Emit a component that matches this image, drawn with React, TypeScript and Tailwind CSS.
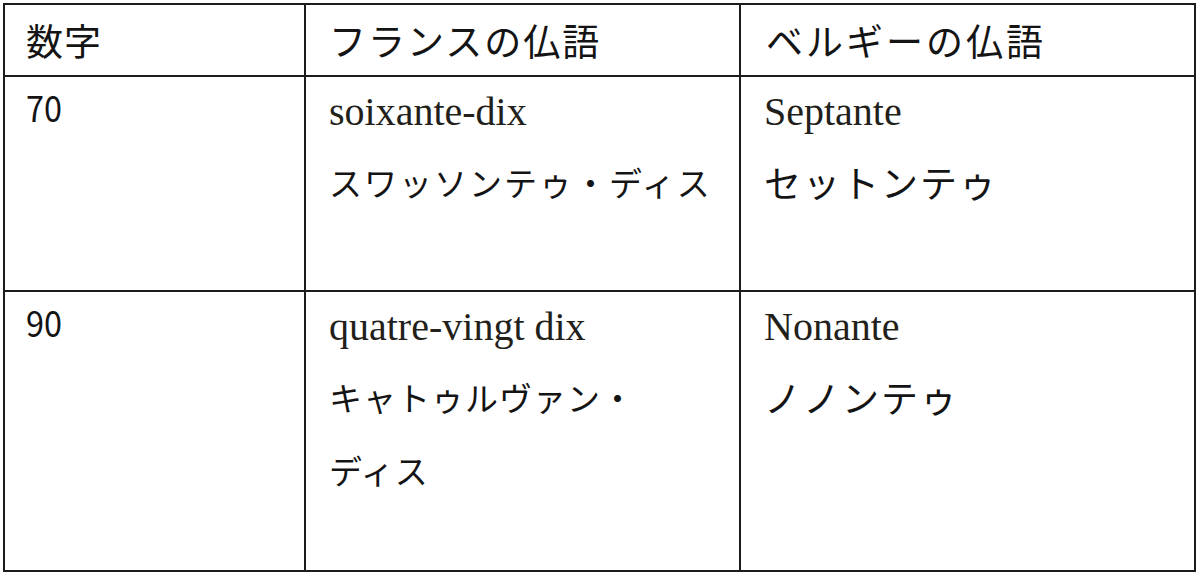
import React from "react";

const jp = "font-['MS_Gothic','Noto_Sans_CJK_JP',sans-serif]";
const lat = "font-['Liberation_Serif','Times_New_Roman',serif]";

function Cell({ children, last, bottom, h }: { children?: React.ReactNode; last?: boolean; bottom?: boolean; h: string }) {
  return (
    <div className={`${h} ${last ? "" : "border-r-2"} ${bottom ? "" : "border-b-2"} border-[#1c1c1c] pl-[21px]`}>
      {children}
    </div>
  );
}

export default function App() {
  return (
    <div className="w-[1200px] h-[576px] bg-white pt-[3px] pl-[3px] overflow-hidden">
      <div className="w-[1193px] border-2 border-[#1c1c1c] grid grid-cols-[301px_435px_453px] text-[#141414]">
        {/* header */}
        <Cell h="h-[72px]">
          <div className={`${jp} text-[37px] leading-[70px] tracking-[1px]`}>数字</div>
        </Cell>
        <Cell h="h-[72px]">
          <div className={`${jp} text-[37px] leading-[70px] tracking-[2px] pl-[2px]`}>フランスの仏語</div>
        </Cell>
        <Cell h="h-[72px]" last>
          <div className={`${jp} text-[37px] leading-[70px] tracking-[3px] pl-[4px]`}>ベルギーの仏語</div>
        </Cell>

        {/* row 70 */}
        <Cell h="h-[215px]">
          <div className={`${jp} text-[36px] leading-[58px] scale-x-90 origin-left`}>70</div>
        </Cell>
        <Cell h="h-[215px]">
          <div className={`${lat} text-[40px] leading-[70px] text-[#231f1a] pl-[2px]`}>soixante-dix</div>
          <div className={`${jp} text-[33px] leading-[70px] tracking-[2px] pl-[2px]`}>スワッソンテゥ・ディス</div>
        </Cell>
        <Cell h="h-[215px]" last>
          <div className={`${lat} text-[40px] leading-[70px] text-[#231f1a] pl-[2px]`}>Septante</div>
          <div className={`${jp} text-[37px] leading-[70px] tracking-[2px] pl-[2px]`}>セットンテゥ</div>
        </Cell>

        {/* row 90 */}
        <Cell h="h-[278px]" bottom>
          <div className={`${jp} text-[36px] leading-[58px] scale-x-90 origin-left`}>90</div>
        </Cell>
        <Cell h="h-[278px]" bottom>
          <div className={`${lat} text-[40px] leading-[70px] text-[#231f1a] pl-[2px]`}>quatre-vingt dix</div>
          <div className={`${jp} text-[33px] leading-[70px] tracking-[1px] pl-[2px]`}>キャトゥルヴァン・</div>
          <div className={`${jp} text-[33px] leading-[76px] tracking-[1px] pl-[2px]`}>ディス</div>
        </Cell>
        <Cell h="h-[278px]" last bottom>
          <div className={`${lat} text-[40px] leading-[70px] text-[#231f1a] pl-[2px]`}>Nonante</div>
          <div className={`${jp} text-[37px] leading-[70px] tracking-[2px] pl-[2px]`}>ノノンテゥ</div>
        </Cell>
      </div>
    </div>
  );
}
